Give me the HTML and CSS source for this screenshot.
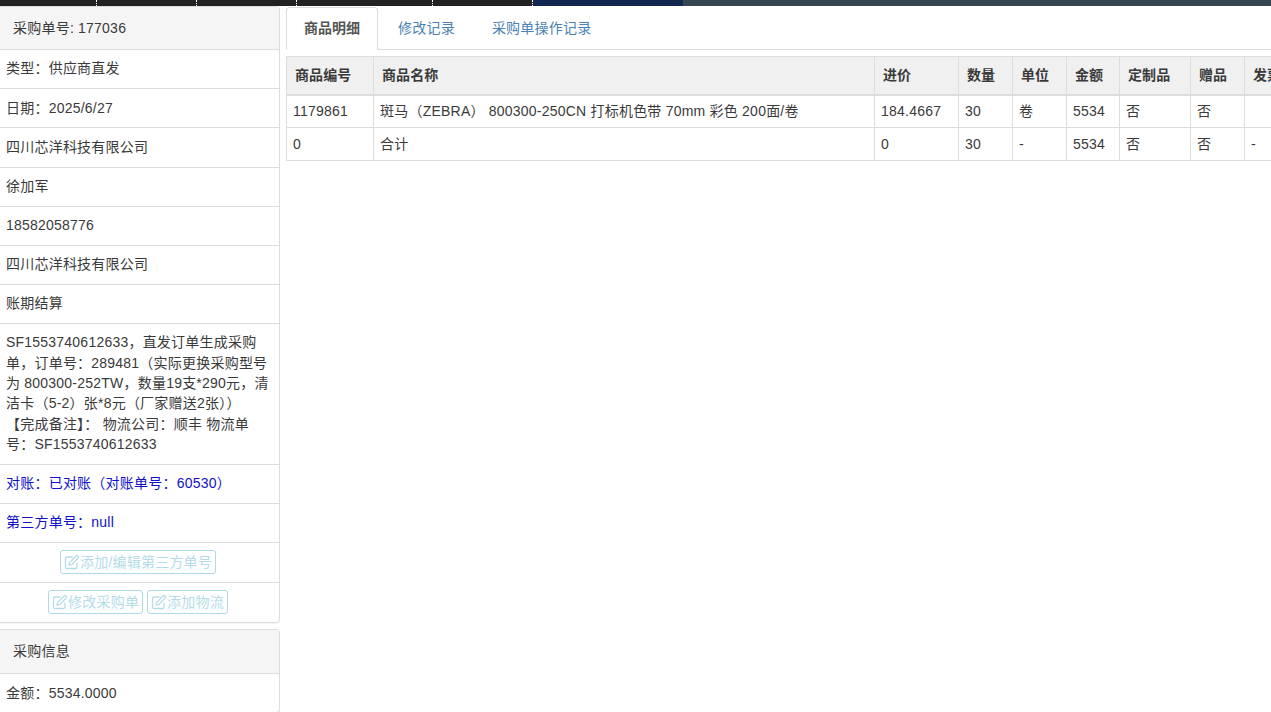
FILE: index.html
```html
<!DOCTYPE html>
<html lang="zh-CN">
<head>
<meta charset="utf-8">
<title>采购单</title>
<link rel="stylesheet" href="styles.css">
</head>
<body>
<svg class="defs" width="0" height="0" aria-hidden="true">
  <symbol id="edit" viewBox="0 0 16 16">
    <path d="M8.500 3H3a1.500 1.500 0 0 0-1.500 1.500V13A1.500 1.500 0 0 0 3 14.500h8.500A1.500 1.500 0 0 0 13 13V8.500" fill="none" stroke="currentColor" stroke-width="1.300"/>
    <path d="M5.500 8.600 12.300 1.800a1 1 0 0 1 1.400 0l.7.7a1 1 0 0 1 0 1.400L7.600 10.700 5 11.200z" fill="none" stroke="currentColor" stroke-width="1.300" stroke-linejoin="round"/>
  </symbol>
</svg>
<div class="topbar">
  <span class="seg seg-a"></span><span class="seg seg-b"></span><span class="seg seg-b"></span><span class="seg seg-c"></span><span class="seg seg-b"></span><span class="seg-navy"></span><span class="seg-slate"></span>
</div>
<div class="layout">
  <aside class="side">
    <section class="panel">
      <h3 class="panel-head">采购单号: 177036</h3>
      <div class="row">类型：供应商直发</div>
      <div class="row">日期：2025/6/27</div>
      <div class="row">四川芯洋科技有限公司</div>
      <div class="row">徐加军</div>
      <div class="row">18582058776</div>
      <div class="row">四川芯洋科技有限公司</div>
      <div class="row">账期结算</div>
      <div class="row">SF1553740612633，直发订单生成采购单，订单号：289481（实际更换采购型号为 800300-252TW，数量19支*290元，清洁卡（5-2）张*8元（厂家赠送2张））<br>【完成备注】： 物流公司：顺丰 物流单号：SF1553740612633</div>
      <div class="row row-blue">对账：已对账（对账单号：60530）</div>
      <div class="row row-blue">第三方单号：null</div>
      <div class="row row-btn">
        <a class="btn"><svg class="ico"><use href="#edit"/></svg>添加/编辑第三方单号</a>
      </div>
      <div class="row row-btn">
        <a class="btn"><svg class="ico"><use href="#edit"/></svg>修改采购单</a>
        <a class="btn"><svg class="ico"><use href="#edit"/></svg>添加物流</a>
      </div>
    </section>
    <section class="panel">
      <h3 class="panel-head panel-head-tall">采购信息</h3>
      <div class="row">金额：5534.0000</div>
    </section>
  </aside>
  <main class="main">
    <nav class="tabs">
      <a class="tab tab-active">商品明细</a>
      <a class="tab">修改记录</a>
      <a class="tab">采购单操作记录</a>
    </nav>
    <table class="grid">
      <colgroup>
        <col class="c1"><col class="c2"><col class="c3"><col class="c4"><col class="c5"><col class="c6"><col class="c7"><col class="c8"><col class="c9">
      </colgroup>
      <thead>
        <tr><th>商品编号</th><th>商品名称</th><th>进价</th><th>数量</th><th>单位</th><th>金额</th><th>定制品</th><th>赠品</th><th>发票</th></tr>
      </thead>
      <tbody>
        <tr><td>1179861</td><td>斑马（ZEBRA） 800300-250CN 打标机色带 70mm 彩色 200面/卷</td><td>184.4667</td><td>30</td><td>卷</td><td>5534</td><td>否</td><td>否</td><td></td></tr>
        <tr><td>0</td><td>合计</td><td>0</td><td>30</td><td>-</td><td>5534</td><td>否</td><td>否</td><td>-</td></tr>
      </tbody>
    </table>
  </main>
</div>
</body>
</html>
```
FILE: styles.css
```css
* { box-sizing: border-box; }
html, body { height: 100%; }
body {
  margin: 0;
  overflow: hidden;
  background: #fff;
  color: #3a3a3a;
  font-family: "Liberation Sans", "Noto Sans CJK SC", sans-serif;
  font-size: 14px;
  line-height: 20px;
  letter-spacing: .22px;
}
.defs { position: absolute; }

.topbar { display: flex; height: 6px; }
.seg { background: #222; border-right: 1px dotted #fff; }
.seg-a { width: 97px; }
.seg-b { width: 100px; }
.seg-c { width: 136px; }
.seg-navy { width: 150px; background: #12274f; }
.seg-slate { flex: 1; background: #36454f; }

.layout { display: flex; align-items: flex-start; gap: 6px; }
.side { flex: 0 0 280px; }
.panel {
  border: 1px solid #ddd;
  border-left: 0;
  border-radius: 0 4px 4px 0;
  margin-bottom: 6px;
  box-shadow: 0 1px 1px rgba(0, 0, 0, .05);
  background: #fff;
}
.panel-head {
  margin: 0;
  height: 43.1px;
  padding: 11px 13px;
  font-size: 14px;
  font-weight: 400;
  background: #f5f5f5;
  border-bottom: 1px solid #ddd;
}
.panel-head-tall { height: 44.3px; }
.row {
  padding: 8.4px 6px 9.46px;
  line-height: 20.3px;
  border-bottom: 1px solid #ddd;
}
.row:last-child { border-bottom: 0; }
.row-blue { color: #1010cc; }
.row-btn { display: flex; justify-content: center; gap: 4px; padding: 7.5px 8px 7.5px 5px; }
.btn {
  display: inline-flex;
  align-items: center;
  height: 24px;
  padding: 0 3px;
  border: 1px solid #aed9e6;
  border-radius: 3px;
  color: #b4dce8;
  font-size: 14px;
}
.ico { width: 16px; height: 16px; }

.main { flex: 1; min-width: 0; overflow: hidden; }
.tabs { display: flex; height: 44px; border-bottom: 1px solid #ddd; }
.tab {
  height: 44px;
  margin-right: 2px;
  padding: 12px 17px 12px 18px;
  color: #4a82b4;
}
.tab-active {
  margin-right: 2px;
  margin-top: 1px;
  height: 43px;
  padding: 10px 17px;
  border: 1px solid #ddd;
  border-bottom-color: #fff;
  border-radius: 4px 4px 0 0;
  color: #555;
  font-weight: 700;
  background: #fff;
  letter-spacing: 0;
}
.grid {
  width: 1040px;
  margin-top: 6px;
  border-collapse: collapse;
  table-layout: fixed;
}
.c1 { width: 87px; }
.c2 { width: 501px; }
.c3 { width: 84px; }
.c4 { width: 54px; }
.c5 { width: 54px; }
.c6 { width: 53px; }
.c7 { width: 71px; }
.c8 { width: 54px; }
.c9 { width: 82px; }
.grid th, .grid td { border: 1px solid #ddd; text-align: left; white-space: nowrap; overflow: hidden; }
.grid th {
  height: 38px;
  padding: 8px;
  background: #f0f0f0;
  border-bottom-width: 2px;
  letter-spacing: .1px;
}
.grid td { height: 33px; padding: 5px 6px; }
```
